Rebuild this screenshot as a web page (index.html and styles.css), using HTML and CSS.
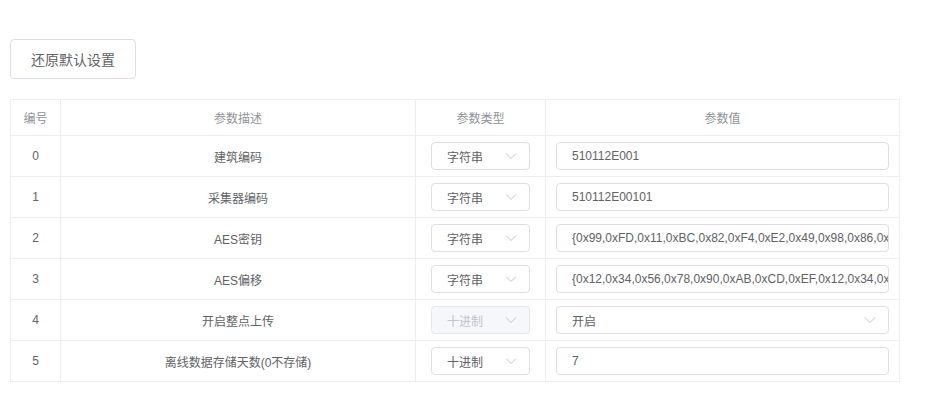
FILE: index.html
```html
<!DOCTYPE html>
<html lang="zh-CN">
<head>
<meta charset="utf-8">
<link rel="stylesheet" href="styles.css">
</head>
<body>
<div class="page">
  <button class="btn">还原默认设置</button>
  <table class="grid">
    <colgroup>
      <col class="c-no"><col class="c-desc"><col class="c-type"><col class="c-val">
    </colgroup>
    <thead>
      <tr><th>编号</th><th>参数描述</th><th>参数类型</th><th>参数值</th></tr>
    </thead>
    <tbody>
      <tr>
        <td>0</td><td>建筑编码</td>
        <td><div class="sel"><span>字符串</span><svg class="arrow" viewBox="0 0 12 8"><path d="M1 1.5 L6 6.5 L11 1.5" /></svg></div></td>
        <td><div class="inp"><span>510112E001</span></div></td>
      </tr>
      <tr>
        <td>1</td><td>采集器编码</td>
        <td><div class="sel"><span>字符串</span><svg class="arrow" viewBox="0 0 12 8"><path d="M1 1.5 L6 6.5 L11 1.5" /></svg></div></td>
        <td><div class="inp"><span>510112E00101</span></div></td>
      </tr>
      <tr>
        <td>2</td><td>AES密钥</td>
        <td><div class="sel"><span>字符串</span><svg class="arrow" viewBox="0 0 12 8"><path d="M1 1.5 L6 6.5 L11 1.5" /></svg></div></td>
        <td><div class="inp"><span>{0x99,0xFD,0x11,0xBC,0x82,0xF4,0xE2,0x49,0x98,0x86,0x3A,0x5C}</span></div></td>
      </tr>
      <tr>
        <td>3</td><td>AES偏移</td>
        <td><div class="sel"><span>字符串</span><svg class="arrow" viewBox="0 0 12 8"><path d="M1 1.5 L6 6.5 L11 1.5" /></svg></div></td>
        <td><div class="inp"><span>{0x12,0x34,0x56,0x78,0x90,0xAB,0xCD,0xEF,0x12,0x34,0x56,0x78}</span></div></td>
      </tr>
      <tr>
        <td>4</td><td>开启整点上传</td>
        <td><div class="sel disabled"><span>十进制</span><svg class="arrow" viewBox="0 0 12 8"><path d="M1 1.5 L6 6.5 L11 1.5" /></svg></div></td>
        <td><div class="inp wide-sel"><span>开启</span><svg class="arrow" viewBox="0 0 12 8"><path d="M1 1.5 L6 6.5 L11 1.5" /></svg></div></td>
      </tr>
      <tr>
        <td>5</td><td>离线数据存储天数(0不存储)</td>
        <td><div class="sel"><span>十进制</span><svg class="arrow" viewBox="0 0 12 8"><path d="M1 1.5 L6 6.5 L11 1.5" /></svg></div></td>
        <td><div class="inp"><span>7</span></div></td>
      </tr>
    </tbody>
  </table>
</div>
</body>
</html>
```
FILE: styles.css
```css
html, body {
  margin: 0;
  padding: 0;
  background: #fff;
}
body {
  font-family: "Liberation Sans", "Noto Sans CJK SC", sans-serif;
  color: #606266;
}
.page {
  padding: 39px 30px 0 10px;
}
.btn {
  display: block;
  box-sizing: border-box;
  height: 40px;
  width: 126px;
  padding: 0;
  border: 1px solid #dcdfe6;
  border-radius: 4px;
  background: #fff;
  color: #606266;
  font-family: inherit;
  font-size: 14px;
  cursor: pointer;
}
.grid {
  margin-top: 20px;
  width: 889px;
  border-collapse: collapse;
  table-layout: fixed;
  font-size: 12px;
}
.c-no { width: 50px; }
.c-desc { width: 355px; }
.c-type { width: 130px; }
.c-val { width: 354px; }
.grid th, .grid td {
  border: 1px solid #ebeef5;
  text-align: center;
  padding: 0;
}
.grid th {
  height: 35px;
  font-weight: normal;
  color: #909399;
}
.grid td {
  height: 40px;
  color: #606266;
}
.sel, .inp {
  box-sizing: border-box;
  height: 28px;
  border: 1px solid #dcdfe6;
  border-radius: 4px;
  background: #fff;
  display: flex;
  align-items: center;
  text-align: left;
  font-size: 12px;
  color: #606266;
  overflow: hidden;
  white-space: nowrap;
}
.sel {
  width: 99px;
  margin: 0 auto;
  padding: 0 12px 0 15px;
  justify-content: space-between;
}
.sel.disabled {
  background: #f5f7fa;
  border-color: #e4e7ed;
  color: #c0c4cc;
}
.inp {
  margin: 0 10px;
  padding: 0 0 0 15px;
}
.inp span {
  overflow: hidden;
  flex: 1;
}
.wide-sel {
  padding-right: 12px;
}
.arrow {
  width: 12px;
  height: 8px;
  flex: none;
  fill: none;
  stroke: #c0c4cc;
  stroke-width: 1;
}
```
